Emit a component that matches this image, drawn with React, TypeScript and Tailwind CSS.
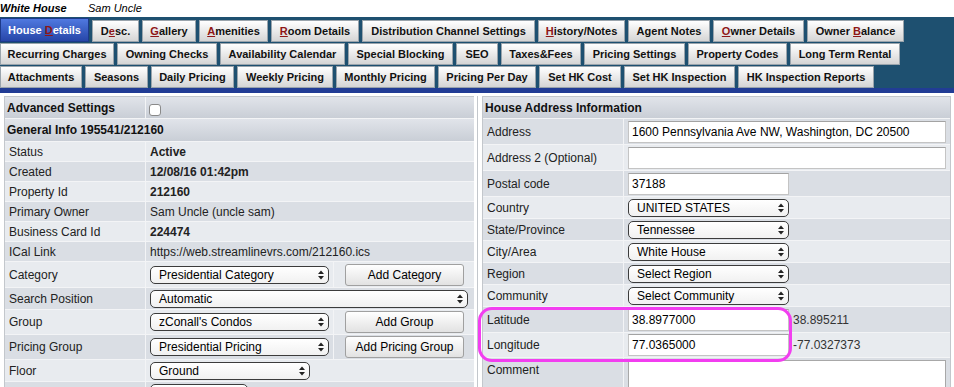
import React from 'react'
import clsx from 'clsx'

type TabDef = { pre?: string; u?: string; post?: string; w: string; active?: boolean }

const row1: TabDef[] = [
  { pre: 'House ', u: 'D', post: 'etails', w: 'w-[89px]', active: true },
  { pre: 'D', u: 'e', post: 'sc.', w: 'w-[47px]' },
  { u: 'G', post: 'allery', w: 'w-[54px]' },
  { u: 'A', post: 'menities', w: 'w-[69px]' },
  { u: 'R', post: 'oom Details', w: 'w-[88px]' },
  { pre: 'Distribution Channel Settings', w: 'w-[173px]' },
  { u: 'H', post: 'istory/Notes', w: 'w-[87px]' },
  { pre: 'Agent Notes', w: 'w-[82px]' },
  { u: 'O', post: 'wner Details', w: 'w-[91px]' },
  { pre: 'Owner ', u: 'B', post: 'alance', w: 'w-[97px]' },
]

const row2: TabDef[] = [
  { pre: 'Recurring Charges', w: 'w-[114px]' },
  { pre: 'Owning Checks', w: 'w-[100px]' },
  { pre: 'Availability Calendar', w: 'w-[125px]' },
  { pre: 'Special Blocking', w: 'w-[105px]' },
  { pre: 'SEO', w: 'w-[42px]' },
  { pre: 'Taxes&Fees', w: 'w-[80px]' },
  { pre: 'Pricing Settings', w: 'w-[101px]' },
  { pre: 'Property Codes', w: 'w-[99px]' },
  { pre: 'Long Term Rental', w: 'w-[110px]' },
]

const row3: TabDef[] = [
  { pre: 'Attachments', w: 'w-[82px]' },
  { pre: 'Seasons', w: 'w-[63px]' },
  { pre: 'Daily Pricing', w: 'w-[83px]' },
  { pre: 'Weekly Pricing', w: 'w-[96px]' },
  { pre: 'Monthly Pricing', w: 'w-[99px]' },
  { pre: 'Pricing Per Day', w: 'w-[98px]' },
  { pre: 'Set HK Cost', w: 'w-[82px]' },
  { pre: 'Set HK Inspection', w: 'w-[111px]' },
  { pre: 'HK Inspection Reports', w: 'w-[136px]' },
]

function Tab({ pre, u, post, w, active }: TabDef) {
  return (
    <div
      className={clsx(
        'shrink-0 flex items-center justify-center border text-[11px] font-bold whitespace-pre',
        w,
        active
          ? 'h-[24px] border-[#1d3a8a] bg-gradient-to-b from-[#5079e0] to-[#2746a8] text-white'
          : 'h-[22px] border-[#9aa4ac] bg-gradient-to-b from-white to-[#d5d5d5] text-[#111]'
      )}
    >
      <span>
        {pre}
        {u && <span className="underline text-[#8e1616]">{u}</span>}
        {post}
      </span>
    </div>
  )
}

function Arrows() {
  return (
    <svg width="6" height="10" viewBox="0 0 6 10" className="shrink-0">
      <polygon points="0,4 3,0.5 6,4" fill="#222" />
      <polygon points="0,6 3,9.5 6,6" fill="#222" />
    </svg>
  )
}

function Select({ value, w }: { value?: string; w: string }) {
  return (
    <div
      className={clsx(
        'h-[18px] rounded-[5px] border border-[#3c3c3c] bg-gradient-to-b from-white to-[#f1f1f1] flex items-center justify-between pl-[8px] pr-[4px] text-[12px] text-black',
        w
      )}
    >
      <span>{value}</span>
      <Arrows />
    </div>
  )
}

function Input({ value, w }: { value?: string; w: string }) {
  return (
    <div
      className={clsx(
        'h-[22px] bg-white border border-[#c4c4c4] border-t-[#a3a3a3] flex items-center pl-[3px] text-[12px] text-black',
        w
      )}
    >
      {value}
    </div>
  )
}

function Button({ label }: { label: string }) {
  return (
    <div className="w-[119px] h-[22px] border border-[#a0a0a0] rounded-[3px] bg-gradient-to-b from-white to-[#e2e2e2] flex items-center justify-center text-[12px] text-black">
      {label}
    </div>
  )
}

interface RowProps {
  label?: string
  h: string
  dark?: boolean
  top?: boolean
  children?: React.ReactNode
  third?: React.ReactNode
}

function Row({ label, h, dark, top, children, third }: RowProps) {
  return (
    <div className={clsx('flex border-b border-[#f3f4f6]', h, dark ? 'bg-[#dadee4]' : 'bg-[#e8ebef]')}>
      <div
        className={clsx(
          'w-[141px] shrink-0 pl-[4px] flex border-r border-[#f3f4f6] text-[#222]',
          top ? 'items-start pt-[3px]' : 'items-center'
        )}
      >
        {label}
      </div>
      <div
        className={clsx(
          'flex pl-[4px]',
          third ? 'w-[188px] shrink-0 border-r border-[#f3f4f6]' : 'flex-1',
          top ? 'items-start pt-[2px]' : 'items-center'
        )}
      >
        {children}
      </div>
      {third && <div className="flex-1 flex items-center pl-[11px]">{third}</div>}
    </div>
  )
}

function LeftPanel() {
  return (
    <div className="ml-[4px] w-[470px] shrink-0 border-l border-t border-[#c3c7cc]">
      <div className="flex h-[22px] border-b border-[#f3f4f6] bg-gradient-to-b from-[#e1e4ea] to-[#c9ced6]">
        <div className="w-[141px] shrink-0 pl-[2px] flex items-center font-bold text-[#111] border-r border-[#f3f4f6]">
          Advanced Settings
        </div>
        <div className="flex-1 flex items-end pb-[2px] pl-[3px]">
          <div className="w-[12px] h-[12px] bg-white border border-[#8a8a8a] rounded-[3px]" />
        </div>
      </div>
      <div className="h-[23px] flex items-center pl-[2px] font-bold text-[#111] border-b border-[#f3f4f6] bg-gradient-to-b from-[#e1e4ea] to-[#c9ced6]">
        General Info 195541/212160
      </div>
      <Row label="Status" h="h-[20px]"><span className="font-bold">Active</span></Row>
      <Row label="Created" h="h-[20px]" dark><span className="font-bold">12/08/16 01:42pm</span></Row>
      <Row label="Property Id" h="h-[20px]"><span className="font-bold">212160</span></Row>
      <Row label="Primary Owner" h="h-[20px]" dark>Sam Uncle (uncle sam)</Row>
      <Row label="Business Card Id" h="h-[20px]"><span className="font-bold">224474</span></Row>
      <Row label="ICal Link" h="h-[20px]" dark>https://web.streamlinevrs.com/212160.ics</Row>
      <Row label="Category" h="h-[26px]" third={<Button label="Add Category" />}>
        <Select value="Presidential Category" w="w-[179px]" />
      </Row>
      <Row label="Search Position" h="h-[22px]" dark>
        <Select value="Automatic" w="w-[318px]" />
      </Row>
      <Row label="Group" h="h-[25px]" third={<Button label="Add Group" />}>
        <Select value="zConall's Condos" w="w-[179px]" />
      </Row>
      <Row label="Pricing Group" h="h-[25px]" dark third={<Button label="Add Pricing Group" />}>
        <Select value="Presidential Pricing" w="w-[179px]" />
      </Row>
      <Row label="Floor" h="h-[22px]">
        <Select value="Ground" w="w-[160px]" />
      </Row>
      <Row h="h-[22px]" dark top>
        <Select w="w-[98px]" />
      </Row>
    </div>
  )
}

function RightPanel() {
  const coord = 'ml-[4px] text-[#333]'
  return (
    <div className="w-[469px] shrink-0 border-l border-t border-r border-[#c3c7cc]">
      <div className="h-[22px] flex items-center pl-[2px] font-bold text-[#111] border-b border-[#f3f4f6] bg-gradient-to-b from-[#e1e4ea] to-[#c9ced6]">
        House Address Information
      </div>
      <Row label="Address" h="h-[26px]" dark>
        <Input value="1600 Pennsylvania Ave NW, Washington, DC 20500" w="w-[318px]" />
      </Row>
      <Row label="Address 2 (Optional)" h="h-[26px]">
        <Input w="w-[318px]" />
      </Row>
      <Row label="Postal code" h="h-[26px]" dark>
        <Input value="37188" w="w-[161px]" />
      </Row>
      <Row label="Country" h="h-[22px]"><Select value="UNITED STATES" w="w-[161px]" /></Row>
      <Row label="State/Province" h="h-[22px]" dark><Select value="Tennessee" w="w-[161px]" /></Row>
      <Row label="City/Area" h="h-[22px]"><Select value="White House" w="w-[161px]" /></Row>
      <Row label="Region" h="h-[22px]" dark><Select value="Select Region" w="w-[161px]" /></Row>
      <Row label="Community" h="h-[22px]"><Select value="Select Community" w="w-[161px]" /></Row>
      <Row label="Latitude" h="h-[26px]" dark>
        <Input value="38.8977000" w="w-[161px]" />
        <span className={coord}>38.895211</span>
      </Row>
      <Row label="Longitude" h="h-[25px]">
        <Input value="77.0365000" w="w-[161px]" />
        <span className={coord}>-77.0327373</span>
      </Row>
      <Row label="Comment" h="h-[50px]" dark top>
        <div className="w-[318px] h-[44px] bg-white border border-[#a8a8a8]" />
      </Row>
    </div>
  )
}

export default function App() {
  return (
    <div className="relative w-[954px] h-[387px] overflow-hidden bg-white font-['Liberation_Sans',Arial,sans-serif] text-[12px] text-[#222]">
      <div className="h-[17px] flex items-center text-[11px] italic text-black">
        <span className="w-[88px] font-bold">White House</span>
        <span>Sam Uncle</span>
      </div>
      <div className="bg-[#1e5070] pt-[1px] flex flex-col gap-[1px]">
        <div className="h-[24px] flex items-end gap-[3px]">
          {row1.map((t, i) => <Tab key={i} {...t} />)}
        </div>
        <div className="h-[22px] flex gap-[3px]">
          {row2.map((t, i) => <Tab key={i} {...t} />)}
        </div>
        <div className="h-[22px] flex gap-[3px]">
          {row3.map((t, i) => <Tab key={i} {...t} />)}
        </div>
      </div>
      <div className="h-[5px] bg-[#213c95]" />
      <div className="flex pt-[3px]">
        <LeftPanel />
        <div className="w-[3px] shrink-0" />
        <div className="w-px shrink-0 bg-[#c3c7cc]" />
        <div className="w-[4px] shrink-0" />
        <RightPanel />
      </div>
      <div className="absolute left-[478px] top-[307px] w-[314px] h-[55px] border-[3px] border-[#f23ef0] rounded-[14px]" />
    </div>
  )
}
